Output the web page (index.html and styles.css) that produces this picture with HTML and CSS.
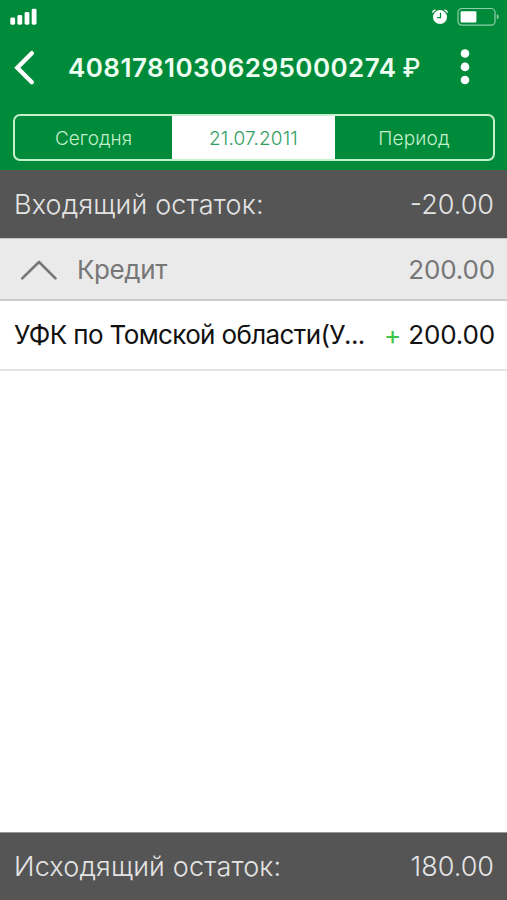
FILE: index.html
```html
<!DOCTYPE html>
<html lang="ru">
<head>
<meta charset="utf-8">
<title>Выписка</title>
<link rel="stylesheet" href="styles.css">
</head>
<body>
<div class="app">
  <header class="header">
    <div class="status">
      <svg class="signal" width="28" height="18" viewBox="0 0 28 18" fill="#fff"><rect x="0.3" y="9.5" width="4.8" height="7.2" rx="1.4"/><rect x="7.4" y="7" width="4.8" height="9.7" rx="1.4"/><rect x="14.6" y="4" width="4.8" height="12.7" rx="1.4"/><rect x="21.7" y="0.7" width="4.8" height="16" rx="1.4"/></svg>
      <svg class="alarm" width="18" height="18" viewBox="0 0 18 18" fill="none" stroke="#fff"><circle cx="9" cy="9.1" r="7" fill="#fff" stroke="none"/><path d="M1.5 4.6Q2 2.3 4.5 2M16.5 4.6Q16 2.3 13.5 2" stroke-width="1.4"/><path d="M9.5 4.8V9.7H6" stroke="#008b3b" stroke-width="1.3"/></svg>
      <svg class="battery" width="43" height="20" viewBox="0 0 43 20"><rect x="1" y="1.5" width="37" height="16.6" rx="3.8" fill="none" stroke="#8fcfaa" stroke-width="1.2"/><rect x="3.6" y="4.2" width="15.8" height="11.4" rx="1" fill="#fff"/><path d="M39.8 7q2 1 2 2.8t-2 2.8z" fill="#8fcfaa"/></svg>
    </div>
    <div class="nav">
      <svg class="back" width="22" height="36" viewBox="0 0 22 36" fill="none" stroke="#fff" stroke-width="4.4" stroke-linecap="round" stroke-linejoin="miter"><path d="M18.8 3.2L4.3 17.8L18.8 32.2"/></svg>
      <h1 class="title">40817810306295000274 <span class="currency">₽</span></h1>
      <svg class="more" width="10" height="36" viewBox="0 0 10 36" fill="#fff"><circle cx="5" cy="4.5" r="4.3"/><circle cx="5" cy="17.9" r="4.3"/><circle cx="5" cy="31" r="4.3"/></svg>
    </div>
    <div class="tabs">
      <div class="tab"><span class="t1">Сегодня</span></div>
      <div class="tab active"><span class="t2">21.07.2011</span></div>
      <div class="tab"><span class="t3">Период</span></div>
    </div>
  </header>
  <section class="balance"><span class="label">Входящий остаток:</span><span class="sum">-20.00</span></section>
  <section class="group">
    <svg class="chevron" width="38" height="22" viewBox="0 0 38 22" fill="none" stroke="#777" stroke-width="2.7" stroke-linecap="round" stroke-linejoin="round"><path d="M2.2 19.4L19 3L35.5 19.4"/></svg>
    <span class="group-name">Кредит</span><span class="amount">200.00</span>
  </section>
  <section class="entry"><span class="payer">УФК по Томской области(У...</span><span class="plus">+</span><span class="amount">200.00</span></section>
  <main class="space"></main>
  <footer class="balance closing"><span class="label">Исходящий остаток:</span><span class="sum">180.00</span></footer>
</div>
</body>
</html>
```
FILE: styles.css
```css
* { box-sizing: border-box; }
body { margin: 0; font-family: Inter, "Liberation Sans", sans-serif; background: #fff; }
svg { display: block; flex: none; }
.app { width: 507px; height: 900px; display: flex; flex-direction: column; overflow: hidden; white-space: nowrap; }
.header { height: 170px; flex: none; background: #008b3b; }
.status { height: 34px; display: flex; align-items: flex-start; padding: 8px 7px 0 10px; }
.alarm { margin-left: auto; margin-right: 8px; }
.battery { margin-top: -1px; }
.nav { height: 66px; display: flex; align-items: center; padding: 0 37px 0 13px; }
.back { margin-top: 1px; }
.title { margin: 2px auto 0 33px; font-size: 26px; line-height: 32px; font-weight: 600; letter-spacing: 0.45px; color: #eefff2; }
.currency { display: inline-block; margin-left: -1px; font-size: 25px; font-weight: 500; line-height: 1; }
.tabs { margin: 14px 12px 0 13px; height: 47px; border: 2px solid #c4f0cc; border-radius: 7px; display: grid; grid-template-columns: 157px 163px 1fr; overflow: hidden; }
.tab { display: flex; align-items: center; justify-content: center; font-size: 19px; color: #c4f0cc; font-weight: 300; padding-top: 1px; }
.t2 { letter-spacing: 0.15px; }
.t3 { letter-spacing: 0.2px; }
.active { background: #fff; color: #339e62; margin: -2px 0; }
.balance { height: 68px; flex: none; display: flex; align-items: center; justify-content: space-between; padding: 0 13px 0 14px; background: #555; color: #e4e4e4; font-size: 27px; font-weight: 300; }
.label { letter-spacing: 0.17px; }
.group { height: 63px; flex: none; display: flex; align-items: center; padding: 1px 12px 0 20px; background: #eaeaea; border-top: 1px solid #c5c5c5; border-bottom: 2px solid #ccc; color: #777; font-size: 26px; }
.group-name { margin-left: 19px; margin-right: auto; letter-spacing: -0.4px; }
.amount { letter-spacing: -0.15px; }
.entry { height: 70px; flex: none; display: flex; align-items: center; padding: 0 12px 2px 14px; border-bottom: 2px solid #e4e4e4; color: #111; font-size: 26px; }
.payer { margin-right: auto; letter-spacing: -0.63px; }
.plus { color: #3cc746; margin-right: 7px; }
.space { flex: 1; }
.closing { height: 68px; border-top: 1px solid #999; }
```
